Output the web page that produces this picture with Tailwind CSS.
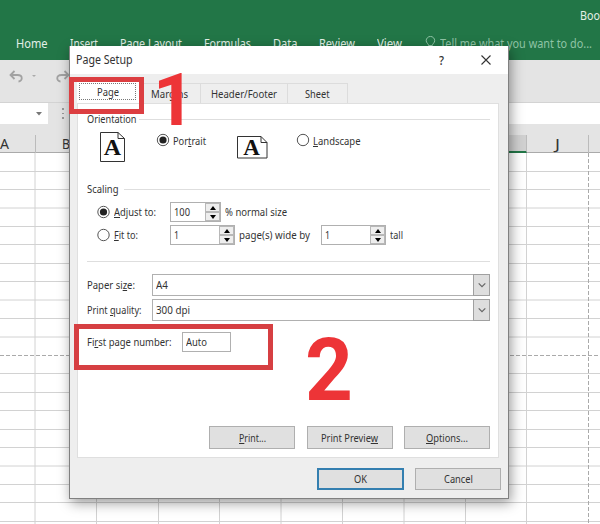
<!DOCTYPE html>
<html lang="en">
<head>
<meta charset="utf-8">
<title>Page Setup</title>
<script src="https://cdn.jsdelivr.net/npm/@tailwindcss/browser@4"></script>
</head>
<body class="w-[600px] h-[524px] overflow-hidden bg-white font-['Noto_Sans',sans-serif] text-[11.5px] leading-4 text-[#333]">
<div class="relative w-[600px] h-[524px] overflow-hidden flex flex-col">
  <!-- Ribbon -->
  <header class="h-[60px] shrink-0 bg-[#227647] text-[#e4f0e8] flex flex-col">
    <div class="h-[32px] pt-[8px] pl-[580px]"><span data-w="20" class="text-[12px]">Boo</span></div>
    <nav class="flex h-[24px] items-center pl-[16px] text-[12px]">
      <span data-w="31.5">Home</span>
      <span data-w="28" class="ml-[22px]">Insert</span>
      <span data-w="62" class="ml-[22px]">Page Layout</span>
      <span data-w="47" class="ml-[22px]">Formulas</span>
      <span data-w="24.5" class="ml-[22px]">Data</span>
      <span data-w="36" class="ml-[22px]">Review</span>
      <span data-w="25" class="ml-[22px]">View</span>
      <svg class="ml-[23px] mt-[-2px]" width="11" height="14" viewBox="0 0 11 14" fill="none" stroke="#8fc3a5"><path d="M3.500 9.500C3.500 7.500 1.200 7 1.200 4.700A4.200 4.200 0 0 1 9.700 4.700C9.700 7 7.400 7.500 7.400 9.500ZM3.500 11.500h3.800M4.300 13h2.200"/></svg>
      <span data-w="152" class="ml-[4px] text-[#8fc3a5]">Tell me what you want to do...</span>
    </nav>
  </header>
  <div class="h-[43px] shrink-0 bg-[#e4e4e4] border-b border-[#d3d3d3] flex pt-[9px] pl-[9px]">
    <svg width="15" height="14" viewBox="0 0 15 14" fill="none" stroke="#a2a2a2" stroke-width="1.800"><path d="M5.500 2 1.500 6l4 4M2 6h6.500c6 0 5 6.500 1 6.500"/></svg>
    <svg class="ml-[7px] mt-[5px]" width="6" height="4"><path d="M1 1h4L3 3z" fill="#aaa"/></svg>
    <svg class="ml-[18px]" width="15" height="14" viewBox="0 0 15 14" fill="none" stroke="#a2a2a2" stroke-width="1.800"><path d="M9.500 2l4 4-4 4M13 6H6.500c-6 0-5 6.500-1 6.500"/></svg>
  </div>
  <div class="h-[21px] shrink-0 bg-[#e4e4e4] flex">
    <div class="w-[48px] bg-white flex items-center justify-end pr-[6px]"><svg width="6" height="4"><path d="M0 0h6L3 3.500z" fill="#777"/></svg></div>
    <div class="ml-[14px] w-[3px] flex flex-col justify-center gap-[3px]"><i class="size-[1.5px] bg-[#999]"></i><i class="size-[1.5px] bg-[#999]"></i><i class="size-[1.5px] bg-[#999]"></i></div>
    <div class="ml-[30px] flex-1 bg-white"></div>
  </div>
  <div class="h-[29px] shrink-0 bg-[#e4e4e4] border-b border-[#aaa] flex text-[14px] leading-[18px] pt-[11px]">
    <div class="w-[35.5px] h-[18px] border-r border-[#bbb]"><span data-w="9">A</span></div>
    <div class="w-[61px] h-[18px] text-center"><span data-w="8">B</span></div>
    <div class="w-[430px] h-[18px] bg-[#d1d1d1] border-r border-b-2 border-r-[#bbb] border-b-[#227647]"></div>
    <div class="w-[62px] h-[18px] border-r border-[#bbb] text-center"><span data-w="5">J</span></div>
  </div>
  <!-- Worksheet gridlines -->
  <svg class="shrink-0" width="600" height="371" viewBox="0 153 600 371" fill="none" stroke="#d2d2d2">
    <path d="M0 171.500H600M0 189.500H600M0 208H600M0 226.500H600M0 244.500H600M0 263.500H600M0 281.500H600M0 300H600M0 318.500H600M0 337H600M0 373.500H600M0 392.500H600M0 410.500H600M0 429.500H600M0 447.500H600M0 466H600M0 484.500H600M0 502.500H600M0 521.500H600"/>
    <path d="M35 153V524M96.500 153V524M158.500 153V524M219.500 153V524M281 153V524M342.500 153V524M404 153V524M465.500 153V524M526.500 153V524"/>
    <path d="M0 355.500H600M588.500 153V524" stroke="#aaa" stroke-dasharray="4 2"/>
  </svg>

  <!-- Dialog -->
  <section class="absolute left-[69px] top-[46px] w-[440px] h-[453px] bg-[#eeeeee] border-l border-r border-b border-[#808080] shadow-[2px_4px_12px_rgba(0,0,0,0.4)] flex flex-col">
    <div class="h-[28px] shrink-0 bg-white flex items-center pl-[6px]">
      <span data-w="56.5" class="text-[12px]">Page Setup</span>
      <span data-w="5" class="ml-[306px] text-[13px] font-medium">?</span>
      <svg class="ml-[37px]" width="10" height="10" viewBox="0 0 10 10" stroke="#333" stroke-width="1.100"><path d="M.5.5l9 9M9.500.5l-9 9"/></svg>
    </div>
    <div class="h-[29px] shrink-0 flex items-end pl-[7px]">
      <div class="w-[62px] h-[22px] bg-white pt-[2px] pl-[2px]"><div class="w-[57px] h-[17px] border border-dotted border-[#777] flex items-center justify-center"><span data-w="22">Page</span></div></div>
      <div class="w-[62px] h-[20px] border-t border-r border-[#dcdcdc] flex items-center justify-center"><span data-w="37">Margins</span></div>
      <div class="w-[86.5px] h-[20px] border-t border-r border-[#dcdcdc] flex items-center justify-center"><span data-w="66">Header/Footer</span></div>
      <div class="w-[60px] h-[20px] border-t border-r border-[#dcdcdc] flex items-center justify-center"><span data-w="24.5">Sheet</span></div>
    </div>
    <div class="ml-[7px] w-[422px] h-[355px] shrink-0 bg-white border border-[#dfdfdf] pl-[9px] pr-[8px] flex flex-col">
      <div class="mt-[7px] h-[16px] flex items-center"><span data-w="49.5">Orientation</span><div class="ml-[2px] flex-1 h-px bg-[#dedede]"></div></div>
      <div class="h-[38px] mt-[2px] flex items-start">
        <svg class="ml-[13px] mt-[3px]" width="26" height="31" viewBox="0 0 26 31"><path d="M.5.5h17.500l6.500 6v23H.5z" fill="#fff" stroke="#333"/><path d="M18 .5v6h6.500" fill="none" stroke="#333"/><text x="12.500" y="23" text-anchor="middle" font-family="Liberation Serif,serif" font-weight="bold" font-size="24" fill="#111">A</text></svg>
        <svg class="ml-[30px] mt-[4px]" width="14" height="14"><circle cx="7" cy="7" r="5.700" fill="#fff" stroke="#555"/><circle cx="7" cy="7" r="3.600" fill="#222"/></svg>
        <span data-w="33" class="ml-[3px] mt-[4px]">Por<u>t</u>rait</span>
        <svg class="ml-[31px] mt-[7px]" width="32" height="24" viewBox="0 0 32 24"><path d="M.5.5H24l6 6v15.500H.5z" fill="#fff" stroke="#333"/><path d="M24 .5v6h6" fill="none" stroke="#333"/><text x="14.500" y="18.500" text-anchor="middle" font-family="Liberation Serif,serif" font-weight="bold" font-size="23" fill="#111">A</text></svg>
        <svg class="ml-[27px] mt-[4px]" width="14" height="14"><circle cx="7" cy="7" r="5.700" fill="#fff" stroke="#555"/></svg>
        <span data-w="47.500" class="ml-[3px] mt-[4px]"><u>L</u>andscape</span>
      </div>
      <div class="mt-[14px] h-[16px] flex items-center"><span data-w="31.500">Scaling</span><div class="ml-[5px] flex-1 h-px bg-[#dedede]"></div></div>
      <div class="mt-[5px] h-[20px] flex items-center">
        <svg class="ml-[9px]" width="15" height="14"><circle cx="7.500" cy="7" r="5.700" fill="#fff" stroke="#555"/><circle cx="7.500" cy="7" r="3.600" fill="#222"/></svg>
        <span data-w="42" class="ml-[3px]"><u>A</u>djust to:</span>
        <div class="ml-[14px] w-[51px] h-[20px] border border-[#b0b0b0] flex items-center"><span data-w="16" class="ml-[3px]">100</span><div class="ml-auto w-[15px] h-[18px] flex flex-col text-black"><div class="h-[9px] border border-[#b8b8b8] bg-[#eee] flex items-center justify-center"><svg width="6" height="4"><path d="M3 0l3 4H0z"/></svg></div><div class="h-[9px] border border-[#b8b8b8] bg-[#eee] flex items-center justify-center"><svg width="6" height="4"><path d="M0 0h6L3 4z"/></svg></div></div></div>
        <span data-w="62" class="ml-[4px]">% normal size</span>
      </div>
      <div class="mt-[3px] h-[20px] flex items-center">
        <svg class="ml-[9px]" width="15" height="14"><circle cx="7.500" cy="7" r="5.700" fill="#fff" stroke="#555"/></svg>
        <span data-w="24" class="ml-[3px]"><u>F</u>it to:</span>
        <div class="ml-[32px] w-[65px] h-[20px] border border-[#b0b0b0] flex items-center"><span data-w="5" class="ml-[3px]">1</span><div class="ml-auto w-[15px] h-[18px] flex flex-col"><div class="h-[9px] border border-[#b8b8b8] bg-[#eee] flex items-center justify-center"><svg width="6" height="4"><path d="M3 0l3 4H0z"/></svg></div><div class="h-[9px] border border-[#b8b8b8] bg-[#eee] flex items-center justify-center"><svg width="6" height="4"><path d="M0 0h6L3 4z"/></svg></div></div></div>
        <span data-w="71" class="ml-[4px]">page(s) wide by</span>
        <div class="ml-[11px] w-[65px] h-[20px] border border-[#b0b0b0] flex items-center"><span data-w="5" class="ml-[3px]">1</span><div class="ml-auto w-[15px] h-[18px] flex flex-col"><div class="h-[9px] border border-[#b8b8b8] bg-[#eee] flex items-center justify-center"><svg width="6" height="4"><path d="M3 0l3 4H0z"/></svg></div><div class="h-[9px] border border-[#b8b8b8] bg-[#eee] flex items-center justify-center"><svg width="6" height="4"><path d="M0 0h6L3 4z"/></svg></div></div></div>
        <span data-w="13" class="ml-[4px]">tall</span>
      </div>
      <div class="mt-[16px] h-px bg-[#dedede] shrink-0"></div>
      <div class="mt-[12px] h-[22px] shrink-0 flex items-center">
        <span data-w="48">Paper si<u>z</u>e:</span>
        <div class="ml-[17px] flex-1 h-[22px] border border-[#b0b0b0] flex items-center"><span data-w="12" class="ml-[3px]">A4</span><div class="ml-auto -mr-px w-[17px] h-[22px] border border-[#a0a0a0] bg-[#dedede] flex items-center justify-center"><svg width="8" height="6" fill="none" stroke="#666" stroke-width="1.200"><path d="M.7 1.300L4 4.600l3.300-3.300"/></svg></div></div>
      </div>
      <div class="mt-[3px] h-[22px] shrink-0 flex items-center">
        <span data-w="54.500">Print <u>q</u>uality:</span>
        <div class="ml-[10.5px] flex-1 h-[22px] border border-[#b0b0b0] flex items-center"><span data-w="34" class="ml-[3px]">300 dpi</span><div class="ml-auto -mr-px w-[17px] h-[22px] border border-[#a0a0a0] bg-[#dedede] flex items-center justify-center"><svg width="8" height="6" fill="none" stroke="#666" stroke-width="1.200"><path d="M.7 1.300L4 4.600l3.300-3.300"/></svg></div></div>
      </div>
      <div class="mt-[11px] h-[20px] flex items-center">
        <span data-w="84.500">Fi<u>r</u>st page number:</span>
        <div class="ml-[10.5px] w-[49px] h-[20px] border border-[#b0b0b0] flex items-center"><span data-w="21" class="ml-[3px]">Auto</span></div>
      </div>
      <div class="mt-auto mb-[8px] flex justify-end gap-[11.5px]">
        <div class="w-[86px] h-[23px] bg-[#e0e0e0] border border-[#afafaf] flex items-center justify-center"><span data-w="27"><u>P</u>rint...</span></div>
        <div class="w-[86px] h-[23px] bg-[#e0e0e0] border border-[#afafaf] flex items-center justify-center"><span data-w="57">Print Previe<u>w</u></span></div>
        <div class="w-[86px] h-[23px] bg-[#e0e0e0] border border-[#afafaf] flex items-center justify-center"><span data-w="42"><u>O</u>ptions...</span></div>
      </div>
    </div>
    <div class="mt-[10px] flex justify-end gap-[11px] pr-[7px]">
      <div class="w-[87px] h-[22px] bg-[#e0e0e0] border-2 border-[#347fb0] flex items-center justify-center"><span data-w="13">OK</span></div>
      <div class="w-[86px] h-[22px] bg-[#e0e0e0] border border-[#afafaf] flex items-center justify-center"><span data-w="29">Cancel</span></div>
    </div>
  </section>

  <!-- Step annotations over the dialog -->
  <div class="absolute left-[69px] top-[77px] w-[75px] h-[37px] border-[5px] border-[#dc3e41]"></div>
  <div class="absolute left-[74px] top-[324px] w-[199px] h-[46px] border-[5px] border-[#d63f42]"></div>
  <svg class="absolute left-0 top-0" width="600" height="524" font-family="Roboto,sans-serif" font-weight="bold" fill="#ed3437">
    <text x="153" y="124.500" font-size="73">1</text>
    <text transform="translate(305 399.700) scale(.96 1)" font-size="87">2</text>
  </svg>
</div>
<script>
  // Fit each label to its design width, and again whenever its own size changes.
  var fit = new ResizeObserver(function (entries) {
    entries.forEach(function (e) {
      var natural = e.contentRect.width;
      if (natural > 0) e.target.style.transform = 'scaleX(' + e.target.parentNode.dataset.w / natural + ')';
    });
  });
  document.querySelectorAll('[data-w]').forEach(function (el) {
    el.style.display = 'inline-block';
    el.style.whiteSpace = 'nowrap';
    el.style.flex = 'none';
    el.style.width = el.dataset.w + 'px';
    el.style.textAlign = 'left';
    var inner = document.createElement('span');
    while (el.firstChild) inner.appendChild(el.firstChild);
    inner.style.display = 'inline-block';
    inner.style.transformOrigin = '0 50%';
    el.appendChild(inner);
    fit.observe(inner);
  });
</script>
</body>
</html>
